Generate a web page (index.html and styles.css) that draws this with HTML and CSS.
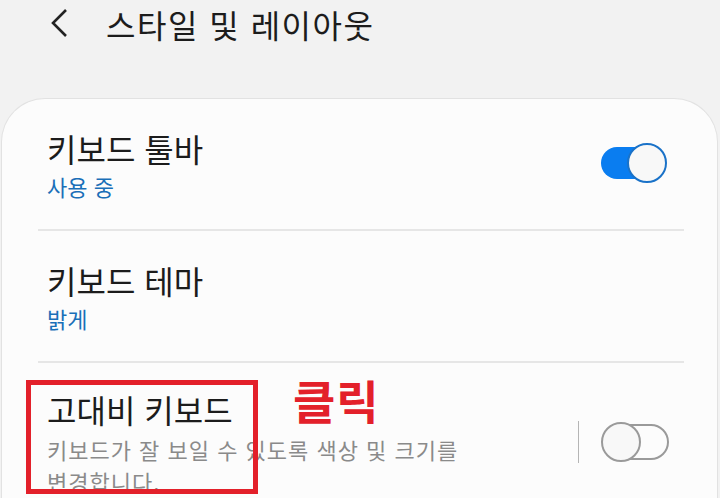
FILE: index.html
```html
<!DOCTYPE html>
<html lang="ko">
<head>
    <meta charset="UTF-8">
    <meta name="viewport" content="width=device-width, initial-scale=1.0">
    <title>스타일 및 레이아웃</title>
    <link rel="stylesheet" href="styles.css">
</head>
<body>
    <header class="top-bar">
        <svg class="back" width="20" height="30" viewBox="0 0 20 30">
            <path d="M17 2 L4 15 L17 28" fill="none" stroke="#222" stroke-width="2.6"/>
        </svg>
        <h1>스타일 및 레이아웃</h1>
    </header>

    <div class="card">
        <div class="row">
            <div class="row-text">
                <div class="title">키보드 툴바</div>
                <div class="sub">사용 중</div>
            </div>
            <div class="switch on"><span class="knob"></span></div>
        </div>

        <div class="divider"></div>

        <div class="row">
            <div class="row-text">
                <div class="title">키보드 테마</div>
                <div class="sub">밝게</div>
            </div>
        </div>

        <div class="divider"></div>

        <div class="row row-last">
            <div class="row-text">
                <div class="title">고대비 키보드</div>
                <div class="desc">키보드가 잘 보일 수 있도록 색상 및 크기를<br>변경합니다.</div>
            </div>
            <div class="vline"></div>
            <div class="switch off"><span class="knob"></span></div>

            <!-- annotation overlay -->
            <div class="mark-box"></div>
            <div class="mark-label">클릭</div>
        </div>
    </div>
</body>
</html>
```

FILE: styles.css
```css
body {
    margin: 0;
    background-color: #f2f2f2;
    font-family: "Noto Sans CJK KR", "Noto Sans", sans-serif;
    color: #1c1c1c;
    width: 720px;
    height: 498px;
    overflow: hidden;
}

.top-bar {
    height: 98px;
    display: flex;
    align-items: flex-start;
    padding-left: 49px;
    box-sizing: border-box;
}

.back {
    margin-top: 8px;
}

.top-bar h1 {
    margin: 1px 0 0 37px;
    font-size: 32px;
    font-weight: 400;
    line-height: 46px;
    letter-spacing: 1.5px;
}

.card {
    margin: 0 2px 0 1px;
    background: #fcfcfc;
    border: 1px solid #e2e2e2;
    border-bottom: none;
    border-radius: 44px 44px 0 0;
    height: 420px;
}

.row {
    position: relative;
    display: flex;
    align-items: center;
    padding: 29px 50px 25px 45px;
}

.row-last {
    padding-top: 26px;
}

.row-text {
    flex: 1;
}

.title {
    font-size: 32px;
    line-height: 40px;
}

.sub {
    font-size: 22px;
    line-height: 36px;
    color: #1a6fb8;
}

.desc {
    margin-top: 4px;
    font-size: 22px;
    line-height: 32px;
    letter-spacing: 1px;
    color: #8a8a8a;
}

.divider {
    height: 2px;
    background: #e6e6e6;
    margin: 0 33px 0 36px;
}

.switch {
    position: relative;
    width: 68px;
    height: 40px;
    box-sizing: border-box;
}

.switch .knob {
    position: absolute;
    top: 0;
    width: 40px;
    height: 40px;
    border-radius: 50%;
    box-sizing: border-box;
    background: #f8f8f8;
}

.switch.on {
    margin-top: -6px;
}

.switch.on::before {
    content: "";
    position: absolute;
    left: 2px;
    top: 4px;
    width: 58px;
    height: 32px;
    border-radius: 16px;
    background: #0a7df0;
}

.switch.on .knob {
    right: 0;
    border: 2px solid #1a72c8;
}

.switch.off {
    margin-top: -2px;
    margin-right: -2px;
}

.switch.off::before {
    content: "";
    position: absolute;
    left: 2px;
    top: 2px;
    width: 66px;
    height: 36px;
    border: 2px solid #9a9a9a;
    border-radius: 20px;
    box-sizing: border-box;
}

.switch.off .knob {
    left: 0;
    border: 2px solid #9a9a9a;
}

.vline {
    width: 1px;
    height: 42px;
    background: #b5b5b5;
    margin: -2px 22px 0 0;
}

.mark-box {
    position: absolute;
    left: 24px;
    top: 17px;
    width: 232px;
    height: 114px;
    border: 5px solid #e3202a;
    box-sizing: border-box;
}

.mark-label {
    position: absolute;
    left: 291px;
    top: 6px;
    font-size: 46px;
    font-weight: 700;
    letter-spacing: 1px;
    color: #e3202a;
    line-height: 60px;
}
```
